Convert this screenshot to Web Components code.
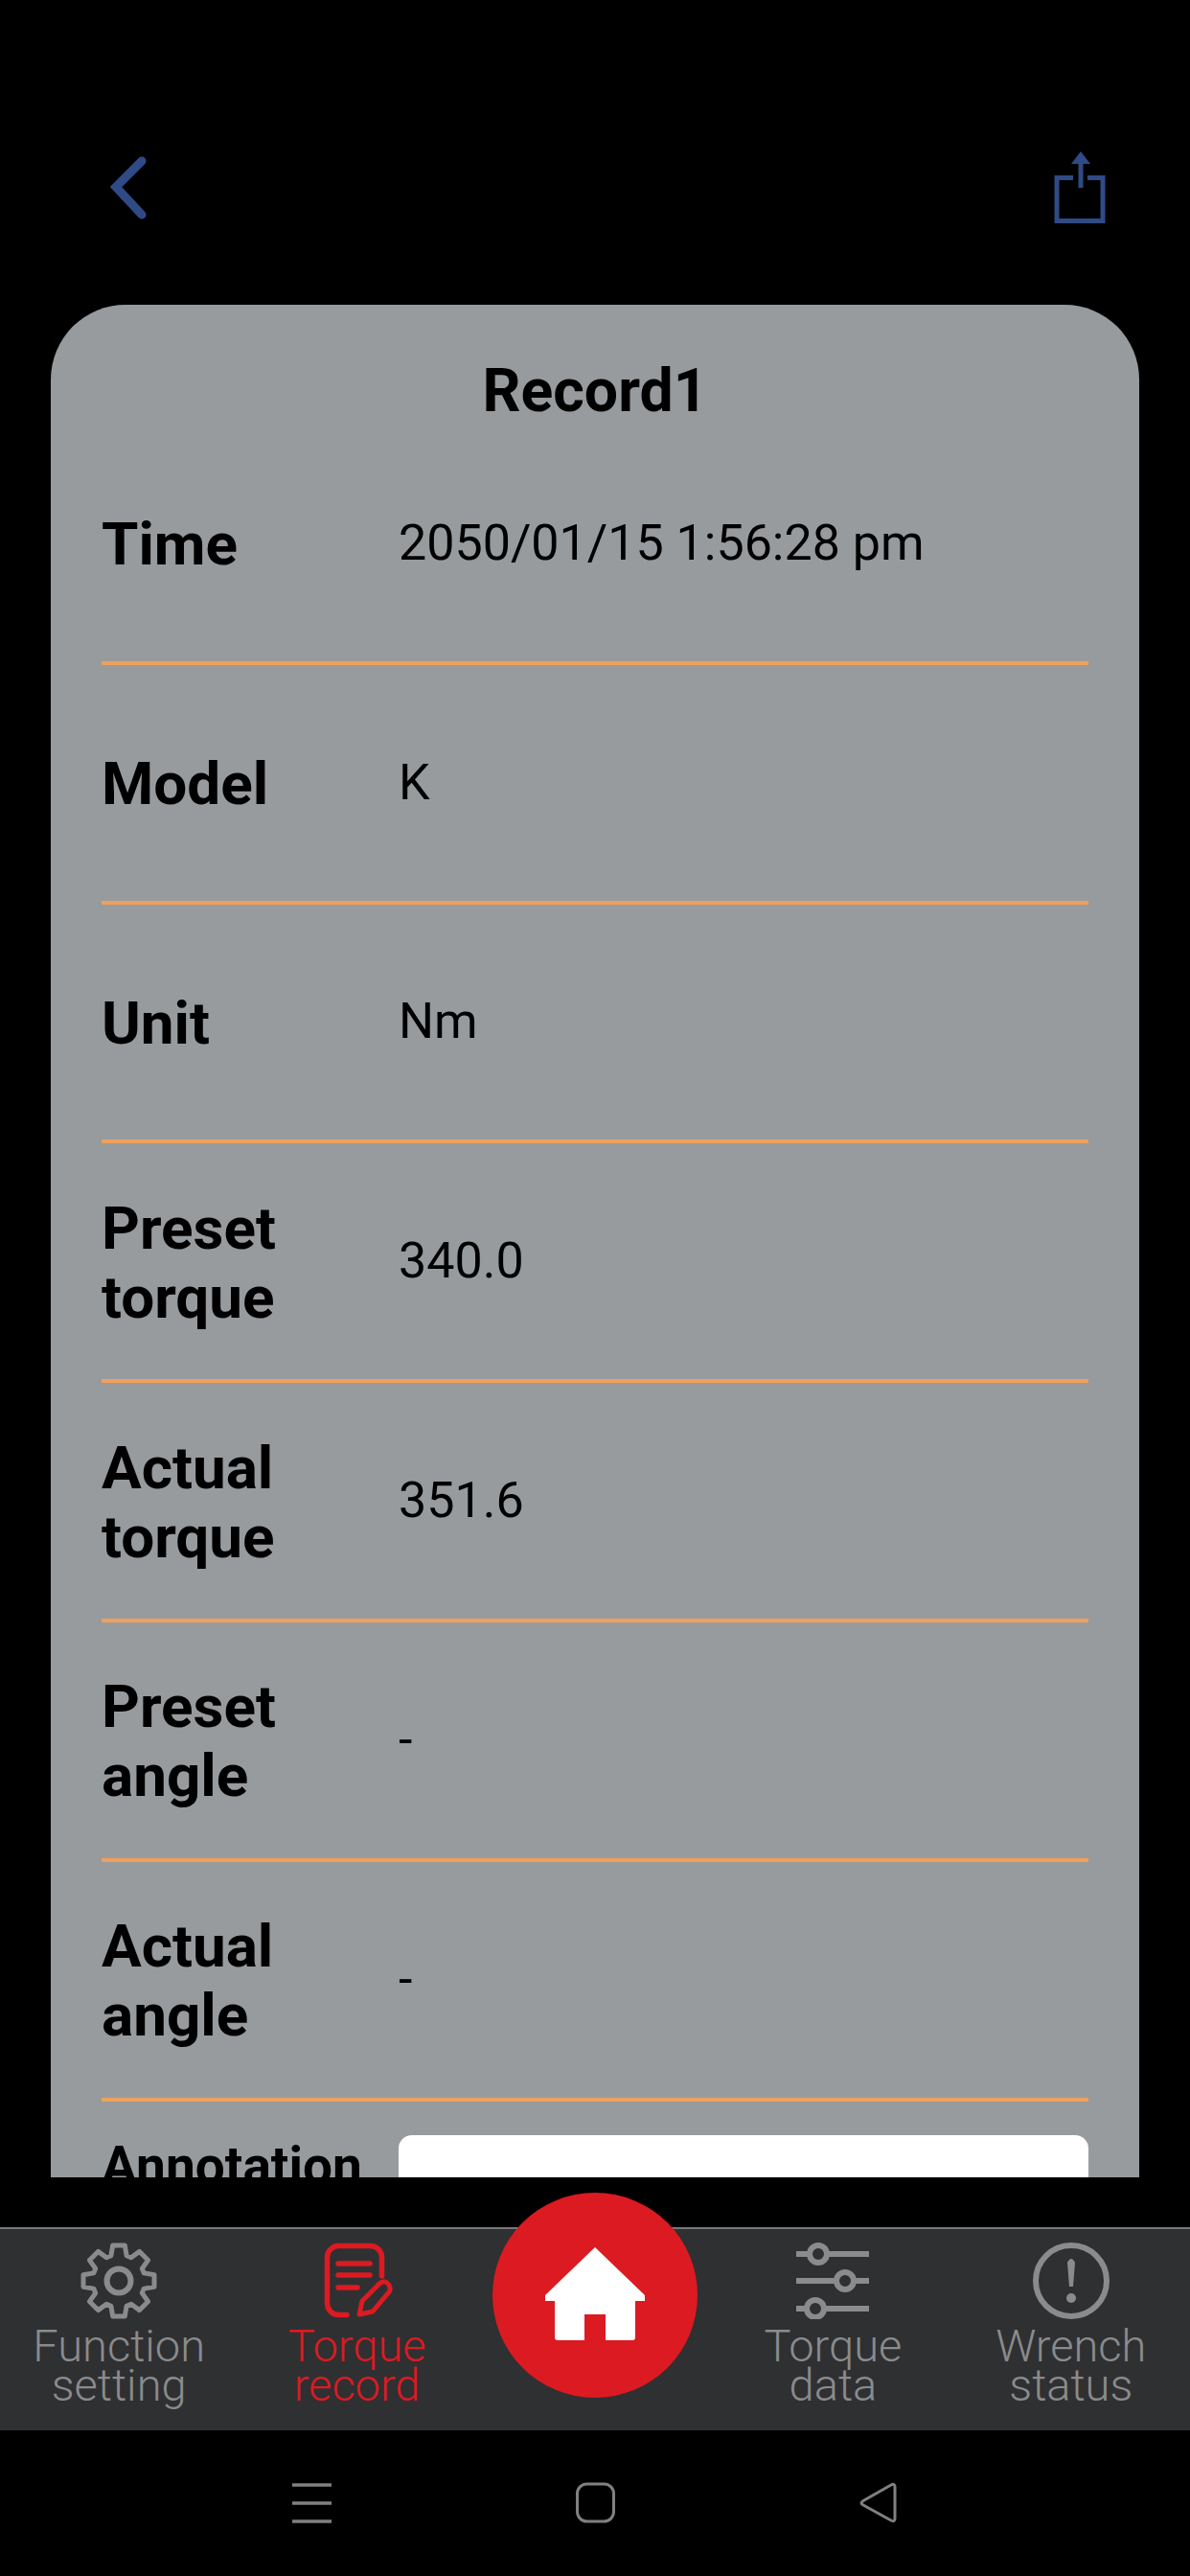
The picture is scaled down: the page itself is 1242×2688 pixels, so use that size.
<!DOCTYPE html>
<html lang="en">
<head>
<meta charset="utf-8">
<title>Record1</title>
<style>
    html, body { margin: 0; background: #000; }
    body { font-family: Roboto, "Liberation Sans", sans-serif; }
</style>
</head>
<body>

<app-screen>
    <top-bar slot="top"></top-bar>

    <record-card slot="main" heading="Record1">
        <record-row label="Time">2050/01/15 1:56:28 pm</record-row>
        <record-row label="Model">K</record-row>
        <record-row label="Unit">Nm</record-row>
        <record-row label="Preset torque">340.0</record-row>
        <record-row label="Actual torque">351.6</record-row>
        <record-row label="Preset angle">-</record-row>
        <record-row label="Actual angle">-</record-row>
        <record-note label="Annotation"></record-note>
    </record-card>

    <tab-bar slot="tabs">
        <tab-item>
            <gear-icon slot="icon"></gear-icon>
            Function<br>setting
        </tab-item>
        <tab-item active>
            <svg slot="icon" width="80" height="80" viewBox="0 0 80 80" fill="none" stroke="currentColor" stroke-width="5.5" stroke-linecap="round" stroke-linejoin="round">
                <path d="M29 75.5H20.5A12 12 0 0 1 8.5 63.5V15.5A12 12 0 0 1 20.5 3.5H53.5A12 12 0 0 1 65.5 15.5V35"/>
                <path d="M20 22H53M20 34H53M20 47H40"/>
                <path stroke-width="5" d="M42 75L45 61L63 43Q69 38 73 44.500Q76 50 71 54L56 72Z"/>
            </svg>
            Torque<br>record
        </tab-item>
        <span></span>
        <tab-item>
            <svg slot="icon" width="80" height="80" viewBox="0 0 80 80" fill="none" stroke="currentColor" stroke-width="6">
                <path d="M2 12H16M34 12H78M2 40H44M62 40H78M2 69H13M31 69H78"/>
                <circle cx="25" cy="12" r="9"/>
                <circle cx="53" cy="40" r="9"/>
                <circle cx="22" cy="69" r="9"/>
            </svg>
            Torque<br>data
        </tab-item>
        <tab-item>
            <svg slot="icon" width="80" height="80" viewBox="0 0 80 80" fill="none" stroke="currentColor" stroke-width="6">
                <circle cx="40" cy="40" r="37"/>
                <path stroke="none" fill="currentColor" d="M36 21Q40 13 44 21L42 46H38Z"/>
                <circle stroke="none" fill="currentColor" cx="40" cy="58" r="5"/>
            </svg>
            Wrench<br>status
        </tab-item>
        <home-button slot="float"></home-button>
    </tab-bar>

    <system-bar slot="system"></system-bar>
</app-screen>

<script>
// ╭───────────────────────────────────────────────────────╮
// │                        SCREEN                         │
// ╰───────────────────────────────────────────────────────╯
class AppScreen extends HTMLElement {
    constructor() {
        super();
        this.attachShadow({ mode: "open" });
        this.shadowRoot.innerHTML = /* html */`
            <style>
                :host {
                    display: flex;
                    flex-direction: column;
                    height: 2688px;
                    background: #000;
                }
                #main {
                    height: 1954px;
                    padding: 0 53px;
                    overflow: hidden;
                }
                #gap { height: 52px; }
            </style>
            <slot name="top"></slot>
            <div id="main"><slot name="main"></slot></div>
            <div id="gap"></div>
            <slot name="tabs"></slot>
            <slot name="system"></slot>
        `;
    }
}

// ╭───────────────────────────────────────────────────────╮
// │                        TOP BAR                        │
// ╰───────────────────────────────────────────────────────╯
class TopBar extends HTMLElement {
    constructor() {
        super();
        this.attachShadow({ mode: "open" });
        this.shadowRoot.innerHTML = /* html */`
            <style>
                :host {
                    display: flex;
                    justify-content: space-between;
                    align-items: flex-start;
                    height: 318px;
                    padding: 158px 88px 0 113px;
                    box-sizing: border-box;
                    color: #2f4a85;
                }
                svg { display: block; }
            </style>
            <svg width="44" height="72" viewBox="0 0 44 72" fill="none" stroke="currentColor" stroke-width="9" stroke-linecap="round" stroke-linejoin="miter">
                <path d="M35 10L8 37L35 66"/>
            </svg>
            <svg width="56" height="76" viewBox="0 0 56 76" fill="none" stroke="currentColor" stroke-width="5">
                <path d="M22 27.500H5V72.500H53V27.500H37"/>
                <path d="M30 10V38"/>
                <path stroke="none" fill="currentColor" d="M30 0L40 13H20Z"/>
            </svg>
        `;
    }
}

// ╭───────────────────────────────────────────────────────╮
// │                      RECORD CARD                      │
// ╰───────────────────────────────────────────────────────╯
class RecordCard extends HTMLElement {
    constructor() {
        super();
        this.attachShadow({ mode: "open" });
        this.shadowRoot.innerHTML = /* html */`
            <style>
                :host {
                    display: block;
                    padding: 0 53px;
                    background: #979b9e;
                    border-radius: 78px 78px 0 0;
                    color: #000;
                }
                h2 {
                    margin: 0;
                    padding-top: 56px;
                    height: 70px;
                    font-size: 62.500px;
                    line-height: 68px;
                    font-weight: 700;
                    text-align: center;
                }
            </style>
            <h2></h2>
            <slot></slot>
        `;
        this.shadowRoot.querySelector("h2").textContent = this.getAttribute("heading");
    }
}

class RecordRow extends HTMLElement {
    constructor() {
        super();
        this.attachShadow({ mode: "open" });
        this.shadowRoot.innerHTML = /* html */`
            <style>
                :host {
                    display: grid;
                    grid-template-columns: 310px 1fr;
                    align-items: center;
                    height: 249.800px;
                    padding-top: 3px;
                    box-sizing: border-box;
                    border-bottom: 4px solid #f0a05c;
                }
                #label {
                    width: 280px;
                    font-size: 62px;
                    line-height: 72px;
                    font-weight: 700;
                }
                #value {
                    margin-top: -3px;
                    font-size: 52px;
                    line-height: 60px;
                }
            </style>
            <div id="label"></div>
            <div id="value"><slot></slot></div>
        `;
        this.shadowRoot.querySelector("#label").textContent = this.getAttribute("label");
    }
}

class RecordNote extends HTMLElement {
    constructor() {
        super();
        this.attachShadow({ mode: "open" });
        this.shadowRoot.innerHTML = /* html */`
            <style>
                :host {
                    display: grid;
                    grid-template-columns: 310px 1fr;
                    align-items: start;
                    padding: 35px 0 40px;
                }
                #label {
                    margin-top: -4px;
                    font-size: 55px;
                    line-height: 72px;
                    font-weight: 700;
                }
                #box {
                    height: 200px;
                    background: #fff;
                    border-radius: 14px;
                }
            </style>
            <div id="label"></div>
            <div id="box"></div>
        `;
        this.shadowRoot.querySelector("#label").textContent = this.getAttribute("label");
    }
}

// ╭───────────────────────────────────────────────────────╮
// │                        TAB BAR                        │
// ╰───────────────────────────────────────────────────────╯
class TabBar extends HTMLElement {
    constructor() {
        super();
        this.attachShadow({ mode: "open" });
        this.shadowRoot.innerHTML = /* html */`
            <style>
                :host {
                    position: relative;
                    display: grid;
                    grid-template-columns: repeat(5, 1fr);
                    height: 212px;
                    box-sizing: border-box;
                    background: #2f3032;
                    border-top: 2px solid #77787a;
                }
                #float {
                    position: absolute;
                    left: 514px;
                    top: -38px;
                }
            </style>
            <slot></slot>
            <div id="float"><slot name="float"></slot></div>
        `;
    }
}

class TabItem extends HTMLElement {
    constructor() {
        super();
        this.attachShadow({ mode: "open" });
        this.shadowRoot.innerHTML = /* html */`
            <style>
                :host {
                    display: flex;
                    flex-direction: column;
                    align-items: center;
                    padding-top: 14px;
                    color: #8a8b8c;
                    font-size: 47px;
                    line-height: 41px;
                    font-weight: 300;
                    text-align: center;
                }
                :host([active]) { color: #dc1a22; }
                #icon { height: 80px; margin-bottom: 7px; }
            </style>
            <div id="icon"><slot name="icon"></slot></div>
            <div><slot></slot></div>
        `;
    }
}

// Gear outline, eight teeth round a small hub
class GearIcon extends HTMLElement {
    constructor() {
        super();
        let d = "";
        for (let i = 0; i < 8; i++) {
            let a = i * Math.PI / 4 - Math.PI / 2;
            let points = [[27.5, -0.3], [37.5, -0.17], [37.5, 0.17], [27.5, 0.3]];
            for (let [r, o] of points) {
                let x = 40 + r * Math.cos(a + o);
                let y = 40 + r * Math.sin(a + o);
                d += (d ? "L" : "M") + x.toFixed(1) + " " + y.toFixed(1);
            }
        }
        this.attachShadow({ mode: "open" });
        this.shadowRoot.innerHTML = /* html */`
            <style>
                :host { display: block; width: 80px; height: 80px; }
                svg { display: block; }
            </style>
            <svg width="80" height="80" viewBox="0 0 80 80" fill="none" stroke="currentColor" stroke-width="5" stroke-linejoin="round">
                <path d="${d}Z"/>
                <circle cx="40" cy="40" r="12.500" stroke-width="6"/>
            </svg>
        `;
    }
}

class HomeButton extends HTMLElement {
    constructor() {
        super();
        this.attachShadow({ mode: "open" });
        this.shadowRoot.innerHTML = /* html */`
            <style>
                :host {
                    display: block;
                    width: 214px;
                    height: 214px;
                    background: #dc1a22;
                    border-radius: 50%;
                }
                svg { display: block; }
            </style>
            <svg width="214" height="214" viewBox="0 0 214 214" fill="#fff">
                <path d="M107 57L159 107V113H149V151Q149 154 146 154H118V127H96V154H68Q65 154 65 151V113H55V107Z"/>
            </svg>
        `;
    }
}

// ╭───────────────────────────────────────────────────────╮
// │                       SYSTEM BAR                      │
// ╰───────────────────────────────────────────────────────╯
class SystemBar extends HTMLElement {
    constructor() {
        super();
        this.attachShadow({ mode: "open" });
        this.shadowRoot.innerHTML = /* html */`
            <style>
                :host {
                    display: flex;
                    flex: 1;
                    justify-content: space-between;
                    align-items: flex-start;
                    padding: 54px 303px 0 305px;
                    color: #808080;
                }
                svg { display: block; }
            </style>
            <svg width="42" height="44" viewBox="0 0 42 44" fill="none" stroke="currentColor" stroke-width="3.500">
                <path d="M0 3H41M0 22H41M0 41H41"/>
            </svg>
            <svg width="42" height="44" viewBox="0 0 42 44" fill="none" stroke="currentColor" stroke-width="3">
                <rect x="1.500" y="2" width="38" height="39" rx="10"/>
            </svg>
            <svg width="42" height="44" viewBox="0 0 42 44" fill="none" stroke="currentColor" stroke-width="3" stroke-linejoin="round">
                <path d="M2 22Q2 21 4 19.500L33 3Q37 1 37 5V38Q37 42 33 40L4 24Q2 23 2 22Z"/>
            </svg>
        `;
    }
}

// ╭───────────────────────────────────────────────────────╮
// │                  DEFINE WEBCOMPONENTS                 │
// ╰───────────────────────────────────────────────────────╯
customElements.define("app-screen", AppScreen);
customElements.define("top-bar", TopBar);
customElements.define("record-card", RecordCard);
customElements.define("record-row", RecordRow);
customElements.define("record-note", RecordNote);
customElements.define("tab-bar", TabBar);
customElements.define("tab-item", TabItem);
customElements.define("gear-icon", GearIcon);
customElements.define("home-button", HomeButton);
customElements.define("system-bar", SystemBar);
</script>
</body>
</html>
